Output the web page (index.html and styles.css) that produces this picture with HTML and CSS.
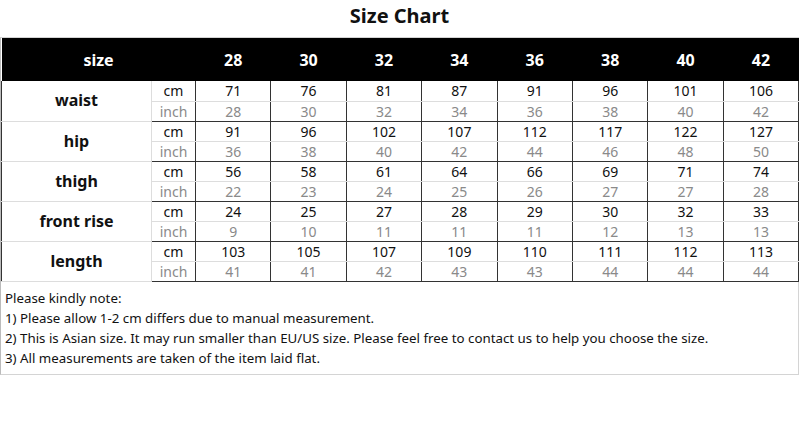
FILE: index.html
```html
<!DOCTYPE html>
<html>
<head>
<meta charset="utf-8">
<link rel="stylesheet" href="styles.css">
</head>
<body>
<div class="page">
  <h1 class="title">Size Chart</h1>
  <div class="chart">
    <table class="sizes">
      <colgroup>
        <col class="c-label"><col class="c-unit">
        <col class="c-num"><col class="c-num"><col class="c-num"><col class="c-num">
        <col class="c-num"><col class="c-num"><col class="c-num"><col class="c-num">
      </colgroup>
      <thead>
        <tr class="head">
          <th colspan="2">size</th>
          <th>28</th><th>30</th><th>32</th><th>34</th><th>36</th><th>38</th><th>40</th><th>42</th>
        </tr>
      </thead>
      <tbody>
        <tr class="cm"><td class="label" rowspan="2">waist</td><td class="unit">cm</td><td>71</td><td>76</td><td>81</td><td>87</td><td>91</td><td>96</td><td>101</td><td>106</td></tr>
        <tr class="inch"><td class="unit">inch</td><td>28</td><td>30</td><td>32</td><td>34</td><td>36</td><td>38</td><td>40</td><td>42</td></tr>
        <tr class="cm"><td class="label" rowspan="2">hip</td><td class="unit">cm</td><td>91</td><td>96</td><td>102</td><td>107</td><td>112</td><td>117</td><td>122</td><td>127</td></tr>
        <tr class="inch"><td class="unit">inch</td><td>36</td><td>38</td><td>40</td><td>42</td><td>44</td><td>46</td><td>48</td><td>50</td></tr>
        <tr class="cm"><td class="label" rowspan="2">thigh</td><td class="unit">cm</td><td>56</td><td>58</td><td>61</td><td>64</td><td>66</td><td>69</td><td>71</td><td>74</td></tr>
        <tr class="inch"><td class="unit">inch</td><td>22</td><td>23</td><td>24</td><td>25</td><td>26</td><td>27</td><td>27</td><td>28</td></tr>
        <tr class="cm"><td class="label" rowspan="2">front rise</td><td class="unit">cm</td><td>24</td><td>25</td><td>27</td><td>28</td><td>29</td><td>30</td><td>32</td><td>33</td></tr>
        <tr class="inch"><td class="unit">inch</td><td>9</td><td>10</td><td>11</td><td>11</td><td>11</td><td>12</td><td>13</td><td>13</td></tr>
        <tr class="cm"><td class="label" rowspan="2">length</td><td class="unit">cm</td><td>103</td><td>105</td><td>107</td><td>109</td><td>110</td><td>111</td><td>112</td><td>113</td></tr>
        <tr class="inch"><td class="unit">inch</td><td>41</td><td>41</td><td>42</td><td>43</td><td>43</td><td>44</td><td>44</td><td>44</td></tr>
      </tbody>
    </table>
    <div class="notes">
      <p>Please kindly note:</p>
      <p>1) Please allow 1-2 cm differs due to manual measurement.</p>
      <p>2) This is Asian size. It may run smaller than EU/US size. Please feel free to contact us to help you choose the size.</p>
      <p>3) All measurements are taken of the item laid flat.</p>
    </div>
  </div>
</div>
</body>
</html>
```

FILE: styles.css
```css
* { box-sizing: border-box; }
html, body { margin: 0; padding: 0; background: #fff; }
body {
  font-family: "Noto Sans", "Open Sans", "Liberation Sans", sans-serif;
  color: #111;
}
.page { width: 800px; }
.title {
  margin: 0;
  height: 37px;
  width: 799px;
  text-align: center;
  font-size: 20px;
  font-weight: 700;
  line-height: 32px;
  color: #111;
}
.chart {
  width: 799px;
  border: 1px solid #d4d4d4;
  border-left-color: #bbb;
}
.sizes {
  border-collapse: collapse;
  width: 797px;
  table-layout: fixed;
}
.c-label { width: 150px; }
.c-unit { width: 44px; }
.c-num { width: 75.4px; }
.head th {
  background: #000;
  color: #fff;
  height: 43px;
  padding: 0;
  font-size: 16px;
  font-weight: 700;
  text-align: center;
}
.sizes td {
  height: 20px;
  padding: 0;
  font-size: 14px;
  line-height: 19px;
  text-align: center;
  border-left: 1px solid #333;
  border-right: 1px solid #333;
}
.sizes tr.cm td {
  color: #111;
  border-top: 1px solid #333;
  border-bottom: 1px solid #ddd;
}
.sizes tr.inch td {
  color: #8a8a8a;
  border-bottom: 1px solid #333;
}
.sizes tbody tr:first-child td { border-top: none; }
.sizes td.label {
  font-size: 16px;
  font-weight: 700;
  color: #111;
  border-right: 1px solid #ddd;
  border-bottom: 1px solid #333;
}
.sizes td.unit { border-left: 1px solid #ddd; }
.notes {
  padding: 6px 4px 6px 4px;
  font-size: 13.3px;
  line-height: 20px;
  color: #111;
}
.notes p { margin: 0; }
```
